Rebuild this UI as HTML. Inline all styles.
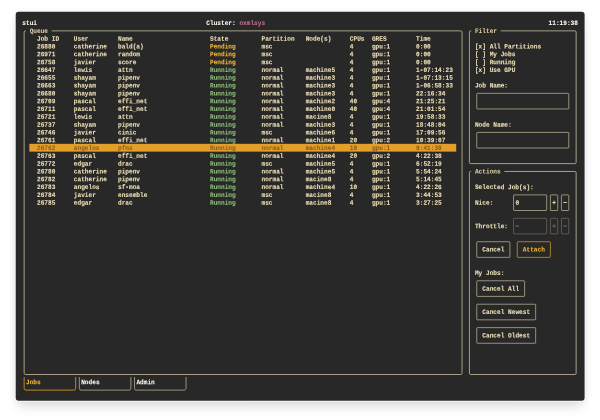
<!DOCTYPE html>
<html><head><meta charset="utf-8"><title>stui</title>
<style>
html,body{margin:0;padding:0;background:#fff;}
body{width:600px;height:420px;position:relative;overflow:hidden;}
#win{position:absolute;left:16px;top:12px;width:568px;height:388px;background:#282828;border-radius:3.5px;box-shadow:0 8px 12px -2px rgba(0,0,0,.15),0 0 7px rgba(0,0,0,.07);}
svg{position:absolute;left:0;top:0;}
#tx{position:absolute;left:0;top:0;width:600px;height:420px;will-change:transform;}
.t{position:absolute;left:0;top:0;transform-origin:0 0;font-family:"Liberation Mono",monospace;font-size:6.133px;line-height:7.81px;height:7.81px;white-space:pre;font-weight:bold;letter-spacing:0;text-rendering:geometricPrecision;-webkit-text-stroke:0.05px currentColor;}
</style></head><body>
<div id="win"></div>
<svg width="600" height="420" viewBox="0 0 600 420" fill="none" stroke-width="0.8" stroke-linecap="butt">
<rect x="14.80" y="11.35" width="570.70" height="390.40" rx="3.4" fill="#fafafa" stroke="none"/>
<rect x="15.7" y="11.85" width="568.90" height="388.80" rx="3" fill="#282828" stroke="none"/>
<rect x="29.36" y="143.81" width="426.88" height="7.81" fill="#e3a028" stroke="none"/>
<path d="M51.74,30.86H460.81Q462.06,30.86 462.06,32.11V373.25Q462.06,374.50 460.81,374.50H25.39Q24.14,374.50 24.14,373.25V32.11Q24.14,30.86 25.39,30.86H25.98" stroke="#c9bc9b" stroke-width="0.8"/>
<path d="M500.70,30.86H574.89Q576.14,30.86 576.14,32.11V162.38Q576.14,163.63 574.89,163.63H470.67Q469.42,163.63 469.42,162.38V32.11Q469.42,30.86 470.67,30.86H471.26" stroke="#c9bc9b" stroke-width="0.8"/>
<path d="M504.38,171.44H574.89Q576.14,171.44 576.14,172.69V373.25Q576.14,374.50 574.89,374.50H470.67Q469.42,374.50 469.42,373.25V172.69Q469.42,171.44 470.67,171.44H471.26" stroke="#c9bc9b" stroke-width="0.8"/>
<path d="M477.38,93.34H568.18Q568.78,93.34 568.78,93.94V108.37Q568.78,108.97 568.18,108.97H477.38Q476.78,108.97 476.78,108.37V93.94Q476.78,93.34 477.38,93.34Z" stroke="#c9bc9b" stroke-width="0.7"/>
<path d="M477.38,132.39H568.18Q568.78,132.39 568.78,132.99V147.41Q568.78,148.01 568.18,148.01H477.38Q476.78,148.01 476.78,147.41V132.99Q476.78,132.39 477.38,132.39Z" stroke="#c9bc9b" stroke-width="0.7"/>
<path d="M514.18,194.88H546.10Q546.70,194.88 546.70,195.47V209.90Q546.70,210.50 546.10,210.50H514.18Q513.58,210.50 513.58,209.90V195.47Q513.58,194.88 514.18,194.88Z" stroke="#c9bc9b" stroke-width="0.7"/>
<path d="M550.98,194.88H557.14Q557.74,194.88 557.74,195.47V209.90Q557.74,210.50 557.14,210.50H550.98Q550.38,210.50 550.38,209.90V195.47Q550.38,194.88 550.98,194.88Z" stroke="#c9bc9b" stroke-width="0.7"/>
<path d="M562.02,194.88H568.18Q568.78,194.88 568.78,195.47V209.90Q568.78,210.50 568.18,210.50H562.02Q561.42,210.50 561.42,209.90V195.47Q561.42,194.88 562.02,194.88Z" stroke="#c9bc9b" stroke-width="0.7"/>
<path d="M514.18,218.31H546.10Q546.70,218.31 546.70,218.91V233.32Q546.70,233.92 546.10,233.92H514.18Q513.58,233.92 513.58,233.32V218.91Q513.58,218.31 514.18,218.31Z" stroke="#786e62" stroke-width="0.7"/>
<path d="M550.98,218.31H557.14Q557.74,218.31 557.74,218.91V233.32Q557.74,233.92 557.14,233.92H550.98Q550.38,233.92 550.38,233.32V218.91Q550.38,218.31 550.98,218.31Z" stroke="#786e62" stroke-width="0.7"/>
<path d="M562.02,218.31H568.18Q568.78,218.31 568.78,218.91V233.32Q568.78,233.92 568.18,233.92H562.02Q561.42,233.92 561.42,233.32V218.91Q561.42,218.31 562.02,218.31Z" stroke="#786e62" stroke-width="0.7"/>
<path d="M477.38,241.73H509.30Q509.90,241.73 509.90,242.33V256.75Q509.90,257.35 509.30,257.35H477.38Q476.78,257.35 476.78,256.75V242.33Q476.78,241.73 477.38,241.73Z" stroke="#c9bc9b" stroke-width="0.7"/>
<path d="M517.86,241.73H549.78Q550.38,241.73 550.38,242.33V256.75Q550.38,257.35 549.78,257.35H517.86Q517.26,257.35 517.26,256.75V242.33Q517.26,241.73 517.86,241.73Z" stroke="#e3a028" stroke-width="0.7"/>
<path d="M477.38,280.78H524.02Q524.62,280.78 524.62,281.38V295.80Q524.62,296.40 524.02,296.40H477.38Q476.78,296.40 476.78,295.80V281.38Q476.78,280.78 477.38,280.78Z" stroke="#c9bc9b" stroke-width="0.7"/>
<path d="M477.38,304.21H535.06Q535.66,304.21 535.66,304.81V319.23Q535.66,319.83 535.06,319.83H477.38Q476.78,319.83 476.78,319.23V304.81Q476.78,304.21 477.38,304.21Z" stroke="#c9bc9b" stroke-width="0.7"/>
<path d="M477.38,327.64H535.06Q535.66,327.64 535.66,328.24V342.66Q535.66,343.26 535.06,343.26H477.38Q476.78,343.26 476.78,342.66V328.24Q476.78,327.64 477.38,327.64Z" stroke="#c9bc9b" stroke-width="0.7"/>
<path d="M24.14,377.01V388.32Q24.14,390.12 25.94,390.12H73.86Q75.66,390.12 75.66,388.32V377.01" stroke="#e3a028" stroke-width="0.8"/>
<path d="M79.34,377.01V388.32Q79.34,390.12 81.14,390.12H129.06Q130.86,390.12 130.86,388.32V377.01" stroke="#b8ad90" stroke-width="0.8"/>
<path d="M134.54,377.01V388.32Q134.54,390.12 136.34,390.12H184.26Q186.06,390.12 186.06,388.32V377.01" stroke="#b8ad90" stroke-width="0.8"/>
</svg>
<div id="tx">
<span class="t" style="transform:translate(22.30px,19.60px) rotate(.04deg) scale(1,1.1);color:#fffdf4">stui</span>
<span class="t" style="transform:translate(206.30px,19.60px) rotate(.04deg) scale(1,1.1);color:#fffdf4">Cluster:</span>
<span class="t" style="transform:translate(239.42px,19.60px) rotate(.04deg) scale(1,1.1);color:#c5708f">oxmlsys</span>
<span class="t" style="transform:translate(548.54px,19.60px) rotate(.04deg) scale(1,1.1);color:#fffdf4">11:19:38</span>
<span class="t" style="transform:translate(29.66px,27.41px) rotate(.04deg) scale(1,1.1);color:#dccda2">Queue</span>
<span class="t" style="transform:translate(474.94px,27.41px) rotate(.04deg) scale(1,1.1);color:#dccda2">Filter</span>
<span class="t" style="transform:translate(474.94px,167.99px) rotate(.04deg) scale(1,1.1);color:#dccda2">Actions</span>
<span class="t" style="transform:translate(37.02px,35.22px) rotate(.04deg) scale(1,1.1);color:#f0e2b8">Job ID</span>
<span class="t" style="transform:translate(73.82px,35.22px) rotate(.04deg) scale(1,1.1);color:#f0e2b8">User</span>
<span class="t" style="transform:translate(117.98px,35.22px) rotate(.04deg) scale(1,1.1);color:#f0e2b8">Name</span>
<span class="t" style="transform:translate(209.98px,35.22px) rotate(.04deg) scale(1,1.1);color:#f0e2b8">State</span>
<span class="t" style="transform:translate(261.50px,35.22px) rotate(.04deg) scale(1,1.1);color:#f0e2b8">Partition</span>
<span class="t" style="transform:translate(305.66px,35.22px) rotate(.04deg) scale(1,1.1);color:#f0e2b8">Node(s)</span>
<span class="t" style="transform:translate(349.82px,35.22px) rotate(.04deg) scale(1,1.1);color:#f0e2b8">CPUs</span>
<span class="t" style="transform:translate(371.90px,35.22px) rotate(.04deg) scale(1,1.1);color:#f0e2b8">GRES</span>
<span class="t" style="transform:translate(416.06px,35.22px) rotate(.04deg) scale(1,1.1);color:#f0e2b8">Time</span>
<span class="t" style="transform:translate(37.02px,43.03px) rotate(.04deg) scale(1,1.1);color:#f0e2b8">26880</span>
<span class="t" style="transform:translate(73.82px,43.03px) rotate(.04deg) scale(1,1.1);color:#f0e2b8">catherine</span>
<span class="t" style="transform:translate(117.98px,43.03px) rotate(.04deg) scale(1,1.1);color:#f0e2b8">bald(a)</span>
<span class="t" style="transform:translate(209.98px,43.03px) rotate(.04deg) scale(1,1.1);color:#fabd2f">Pending</span>
<span class="t" style="transform:translate(261.50px,43.03px) rotate(.04deg) scale(1,1.1);color:#f0e2b8">msc</span>
<span class="t" style="transform:translate(349.82px,43.03px) rotate(.04deg) scale(1,1.1);color:#f0e2b8">4</span>
<span class="t" style="transform:translate(371.90px,43.03px) rotate(.04deg) scale(1,1.1);color:#f0e2b8">gpu:1</span>
<span class="t" style="transform:translate(416.06px,43.03px) rotate(.04deg) scale(1,1.1);color:#f0e2b8">0:00</span>
<span class="t" style="transform:translate(37.02px,50.84px) rotate(.04deg) scale(1,1.1);color:#f0e2b8">26971</span>
<span class="t" style="transform:translate(73.82px,50.84px) rotate(.04deg) scale(1,1.1);color:#f0e2b8">catherine</span>
<span class="t" style="transform:translate(117.98px,50.84px) rotate(.04deg) scale(1,1.1);color:#f0e2b8">random</span>
<span class="t" style="transform:translate(209.98px,50.84px) rotate(.04deg) scale(1,1.1);color:#fabd2f">Pending</span>
<span class="t" style="transform:translate(261.50px,50.84px) rotate(.04deg) scale(1,1.1);color:#f0e2b8">msc</span>
<span class="t" style="transform:translate(349.82px,50.84px) rotate(.04deg) scale(1,1.1);color:#f0e2b8">4</span>
<span class="t" style="transform:translate(371.90px,50.84px) rotate(.04deg) scale(1,1.1);color:#f0e2b8">gpu:1</span>
<span class="t" style="transform:translate(416.06px,50.84px) rotate(.04deg) scale(1,1.1);color:#f0e2b8">0:00</span>
<span class="t" style="transform:translate(37.02px,58.65px) rotate(.04deg) scale(1,1.1);color:#f0e2b8">26758</span>
<span class="t" style="transform:translate(73.82px,58.65px) rotate(.04deg) scale(1,1.1);color:#f0e2b8">javier</span>
<span class="t" style="transform:translate(117.98px,58.65px) rotate(.04deg) scale(1,1.1);color:#f0e2b8">score</span>
<span class="t" style="transform:translate(209.98px,58.65px) rotate(.04deg) scale(1,1.1);color:#fabd2f">Pending</span>
<span class="t" style="transform:translate(261.50px,58.65px) rotate(.04deg) scale(1,1.1);color:#f0e2b8">msc</span>
<span class="t" style="transform:translate(349.82px,58.65px) rotate(.04deg) scale(1,1.1);color:#f0e2b8">4</span>
<span class="t" style="transform:translate(371.90px,58.65px) rotate(.04deg) scale(1,1.1);color:#f0e2b8">gpu:1</span>
<span class="t" style="transform:translate(416.06px,58.65px) rotate(.04deg) scale(1,1.1);color:#f0e2b8">0:00</span>
<span class="t" style="transform:translate(37.02px,66.46px) rotate(.04deg) scale(1,1.1);color:#f0e2b8">26647</span>
<span class="t" style="transform:translate(73.82px,66.46px) rotate(.04deg) scale(1,1.1);color:#f0e2b8">lewis</span>
<span class="t" style="transform:translate(117.98px,66.46px) rotate(.04deg) scale(1,1.1);color:#f0e2b8">attn</span>
<span class="t" style="transform:translate(209.98px,66.46px) rotate(.04deg) scale(1,1.1);color:#8ec07c">Running</span>
<span class="t" style="transform:translate(261.50px,66.46px) rotate(.04deg) scale(1,1.1);color:#f0e2b8">normal</span>
<span class="t" style="transform:translate(305.66px,66.46px) rotate(.04deg) scale(1,1.1);color:#f0e2b8">machine5</span>
<span class="t" style="transform:translate(349.82px,66.46px) rotate(.04deg) scale(1,1.1);color:#f0e2b8">4</span>
<span class="t" style="transform:translate(371.90px,66.46px) rotate(.04deg) scale(1,1.1);color:#f0e2b8">gpu:1</span>
<span class="t" style="transform:translate(416.06px,66.46px) rotate(.04deg) scale(1,1.1);color:#f0e2b8">1-07:14:23</span>
<span class="t" style="transform:translate(37.02px,74.27px) rotate(.04deg) scale(1,1.1);color:#f0e2b8">26655</span>
<span class="t" style="transform:translate(73.82px,74.27px) rotate(.04deg) scale(1,1.1);color:#f0e2b8">shayam</span>
<span class="t" style="transform:translate(117.98px,74.27px) rotate(.04deg) scale(1,1.1);color:#f0e2b8">pipenv</span>
<span class="t" style="transform:translate(209.98px,74.27px) rotate(.04deg) scale(1,1.1);color:#8ec07c">Running</span>
<span class="t" style="transform:translate(261.50px,74.27px) rotate(.04deg) scale(1,1.1);color:#f0e2b8">normal</span>
<span class="t" style="transform:translate(305.66px,74.27px) rotate(.04deg) scale(1,1.1);color:#f0e2b8">machine3</span>
<span class="t" style="transform:translate(349.82px,74.27px) rotate(.04deg) scale(1,1.1);color:#f0e2b8">4</span>
<span class="t" style="transform:translate(371.90px,74.27px) rotate(.04deg) scale(1,1.1);color:#f0e2b8">gpu:1</span>
<span class="t" style="transform:translate(416.06px,74.27px) rotate(.04deg) scale(1,1.1);color:#f0e2b8">1-07:13:15</span>
<span class="t" style="transform:translate(37.02px,82.08px) rotate(.04deg) scale(1,1.1);color:#f0e2b8">26663</span>
<span class="t" style="transform:translate(73.82px,82.08px) rotate(.04deg) scale(1,1.1);color:#f0e2b8">shayam</span>
<span class="t" style="transform:translate(117.98px,82.08px) rotate(.04deg) scale(1,1.1);color:#f0e2b8">pipenv</span>
<span class="t" style="transform:translate(209.98px,82.08px) rotate(.04deg) scale(1,1.1);color:#8ec07c">Running</span>
<span class="t" style="transform:translate(261.50px,82.08px) rotate(.04deg) scale(1,1.1);color:#f0e2b8">normal</span>
<span class="t" style="transform:translate(305.66px,82.08px) rotate(.04deg) scale(1,1.1);color:#f0e2b8">machine3</span>
<span class="t" style="transform:translate(349.82px,82.08px) rotate(.04deg) scale(1,1.1);color:#f0e2b8">4</span>
<span class="t" style="transform:translate(371.90px,82.08px) rotate(.04deg) scale(1,1.1);color:#f0e2b8">gpu:1</span>
<span class="t" style="transform:translate(416.06px,82.08px) rotate(.04deg) scale(1,1.1);color:#f0e2b8">1-06:58:33</span>
<span class="t" style="transform:translate(37.02px,89.89px) rotate(.04deg) scale(1,1.1);color:#f0e2b8">26680</span>
<span class="t" style="transform:translate(73.82px,89.89px) rotate(.04deg) scale(1,1.1);color:#f0e2b8">shayam</span>
<span class="t" style="transform:translate(117.98px,89.89px) rotate(.04deg) scale(1,1.1);color:#f0e2b8">pipenv</span>
<span class="t" style="transform:translate(209.98px,89.89px) rotate(.04deg) scale(1,1.1);color:#8ec07c">Running</span>
<span class="t" style="transform:translate(261.50px,89.89px) rotate(.04deg) scale(1,1.1);color:#f0e2b8">normal</span>
<span class="t" style="transform:translate(305.66px,89.89px) rotate(.04deg) scale(1,1.1);color:#f0e2b8">machine3</span>
<span class="t" style="transform:translate(349.82px,89.89px) rotate(.04deg) scale(1,1.1);color:#f0e2b8">4</span>
<span class="t" style="transform:translate(371.90px,89.89px) rotate(.04deg) scale(1,1.1);color:#f0e2b8">gpu:1</span>
<span class="t" style="transform:translate(416.06px,89.89px) rotate(.04deg) scale(1,1.1);color:#f0e2b8">22:16:34</span>
<span class="t" style="transform:translate(37.02px,97.70px) rotate(.04deg) scale(1,1.1);color:#f0e2b8">26709</span>
<span class="t" style="transform:translate(73.82px,97.70px) rotate(.04deg) scale(1,1.1);color:#f0e2b8">pascal</span>
<span class="t" style="transform:translate(117.98px,97.70px) rotate(.04deg) scale(1,1.1);color:#f0e2b8">effi_net</span>
<span class="t" style="transform:translate(209.98px,97.70px) rotate(.04deg) scale(1,1.1);color:#8ec07c">Running</span>
<span class="t" style="transform:translate(261.50px,97.70px) rotate(.04deg) scale(1,1.1);color:#f0e2b8">normal</span>
<span class="t" style="transform:translate(305.66px,97.70px) rotate(.04deg) scale(1,1.1);color:#f0e2b8">machine2</span>
<span class="t" style="transform:translate(349.82px,97.70px) rotate(.04deg) scale(1,1.1);color:#f0e2b8">40</span>
<span class="t" style="transform:translate(371.90px,97.70px) rotate(.04deg) scale(1,1.1);color:#f0e2b8">gpu:4</span>
<span class="t" style="transform:translate(416.06px,97.70px) rotate(.04deg) scale(1,1.1);color:#f0e2b8">21:25:21</span>
<span class="t" style="transform:translate(37.02px,105.51px) rotate(.04deg) scale(1,1.1);color:#f0e2b8">26711</span>
<span class="t" style="transform:translate(73.82px,105.51px) rotate(.04deg) scale(1,1.1);color:#f0e2b8">pascal</span>
<span class="t" style="transform:translate(117.98px,105.51px) rotate(.04deg) scale(1,1.1);color:#f0e2b8">effi_net</span>
<span class="t" style="transform:translate(209.98px,105.51px) rotate(.04deg) scale(1,1.1);color:#8ec07c">Running</span>
<span class="t" style="transform:translate(261.50px,105.51px) rotate(.04deg) scale(1,1.1);color:#f0e2b8">normal</span>
<span class="t" style="transform:translate(305.66px,105.51px) rotate(.04deg) scale(1,1.1);color:#f0e2b8">machine0</span>
<span class="t" style="transform:translate(349.82px,105.51px) rotate(.04deg) scale(1,1.1);color:#f0e2b8">40</span>
<span class="t" style="transform:translate(371.90px,105.51px) rotate(.04deg) scale(1,1.1);color:#f0e2b8">gpu:4</span>
<span class="t" style="transform:translate(416.06px,105.51px) rotate(.04deg) scale(1,1.1);color:#f0e2b8">21:01:54</span>
<span class="t" style="transform:translate(37.02px,113.32px) rotate(.04deg) scale(1,1.1);color:#f0e2b8">26721</span>
<span class="t" style="transform:translate(73.82px,113.32px) rotate(.04deg) scale(1,1.1);color:#f0e2b8">lewis</span>
<span class="t" style="transform:translate(117.98px,113.32px) rotate(.04deg) scale(1,1.1);color:#f0e2b8">attn</span>
<span class="t" style="transform:translate(209.98px,113.32px) rotate(.04deg) scale(1,1.1);color:#8ec07c">Running</span>
<span class="t" style="transform:translate(261.50px,113.32px) rotate(.04deg) scale(1,1.1);color:#f0e2b8">normal</span>
<span class="t" style="transform:translate(305.66px,113.32px) rotate(.04deg) scale(1,1.1);color:#f0e2b8">macine8</span>
<span class="t" style="transform:translate(349.82px,113.32px) rotate(.04deg) scale(1,1.1);color:#f0e2b8">4</span>
<span class="t" style="transform:translate(371.90px,113.32px) rotate(.04deg) scale(1,1.1);color:#f0e2b8">gpu:1</span>
<span class="t" style="transform:translate(416.06px,113.32px) rotate(.04deg) scale(1,1.1);color:#f0e2b8">19:58:33</span>
<span class="t" style="transform:translate(37.02px,121.13px) rotate(.04deg) scale(1,1.1);color:#f0e2b8">26737</span>
<span class="t" style="transform:translate(73.82px,121.13px) rotate(.04deg) scale(1,1.1);color:#f0e2b8">shayam</span>
<span class="t" style="transform:translate(117.98px,121.13px) rotate(.04deg) scale(1,1.1);color:#f0e2b8">pipenv</span>
<span class="t" style="transform:translate(209.98px,121.13px) rotate(.04deg) scale(1,1.1);color:#8ec07c">Running</span>
<span class="t" style="transform:translate(261.50px,121.13px) rotate(.04deg) scale(1,1.1);color:#f0e2b8">normal</span>
<span class="t" style="transform:translate(305.66px,121.13px) rotate(.04deg) scale(1,1.1);color:#f0e2b8">machine3</span>
<span class="t" style="transform:translate(349.82px,121.13px) rotate(.04deg) scale(1,1.1);color:#f0e2b8">4</span>
<span class="t" style="transform:translate(371.90px,121.13px) rotate(.04deg) scale(1,1.1);color:#f0e2b8">gpu:1</span>
<span class="t" style="transform:translate(416.06px,121.13px) rotate(.04deg) scale(1,1.1);color:#f0e2b8">18:48:04</span>
<span class="t" style="transform:translate(37.02px,128.94px) rotate(.04deg) scale(1,1.1);color:#f0e2b8">26746</span>
<span class="t" style="transform:translate(73.82px,128.94px) rotate(.04deg) scale(1,1.1);color:#f0e2b8">javier</span>
<span class="t" style="transform:translate(117.98px,128.94px) rotate(.04deg) scale(1,1.1);color:#f0e2b8">cinic</span>
<span class="t" style="transform:translate(209.98px,128.94px) rotate(.04deg) scale(1,1.1);color:#8ec07c">Running</span>
<span class="t" style="transform:translate(261.50px,128.94px) rotate(.04deg) scale(1,1.1);color:#f0e2b8">msc</span>
<span class="t" style="transform:translate(305.66px,128.94px) rotate(.04deg) scale(1,1.1);color:#f0e2b8">machine6</span>
<span class="t" style="transform:translate(349.82px,128.94px) rotate(.04deg) scale(1,1.1);color:#f0e2b8">4</span>
<span class="t" style="transform:translate(371.90px,128.94px) rotate(.04deg) scale(1,1.1);color:#f0e2b8">gpu:1</span>
<span class="t" style="transform:translate(416.06px,128.94px) rotate(.04deg) scale(1,1.1);color:#f0e2b8">17:09:56</span>
<span class="t" style="transform:translate(37.02px,136.75px) rotate(.04deg) scale(1,1.1);color:#f0e2b8">26761</span>
<span class="t" style="transform:translate(73.82px,136.75px) rotate(.04deg) scale(1,1.1);color:#f0e2b8">pascal</span>
<span class="t" style="transform:translate(117.98px,136.75px) rotate(.04deg) scale(1,1.1);color:#f0e2b8">effi_net</span>
<span class="t" style="transform:translate(209.98px,136.75px) rotate(.04deg) scale(1,1.1);color:#8ec07c">Running</span>
<span class="t" style="transform:translate(261.50px,136.75px) rotate(.04deg) scale(1,1.1);color:#f0e2b8">normal</span>
<span class="t" style="transform:translate(305.66px,136.75px) rotate(.04deg) scale(1,1.1);color:#f0e2b8">machine1</span>
<span class="t" style="transform:translate(349.82px,136.75px) rotate(.04deg) scale(1,1.1);color:#f0e2b8">20</span>
<span class="t" style="transform:translate(371.90px,136.75px) rotate(.04deg) scale(1,1.1);color:#f0e2b8">gpu:2</span>
<span class="t" style="transform:translate(416.06px,136.75px) rotate(.04deg) scale(1,1.1);color:#f0e2b8">10:39:07</span>
<span class="t" style="transform:translate(37.02px,144.56px) rotate(.04deg) scale(1,1.1);color:#8e5a24">26762</span>
<span class="t" style="transform:translate(73.82px,144.56px) rotate(.04deg) scale(1,1.1);color:#8e5a24">angelos</span>
<span class="t" style="transform:translate(117.98px,144.56px) rotate(.04deg) scale(1,1.1);color:#8e5a24">pfns</span>
<span class="t" style="transform:translate(209.98px,144.56px) rotate(.04deg) scale(1,1.1);color:#8e5a24">Running</span>
<span class="t" style="transform:translate(261.50px,144.56px) rotate(.04deg) scale(1,1.1);color:#8e5a24">normal</span>
<span class="t" style="transform:translate(305.66px,144.56px) rotate(.04deg) scale(1,1.1);color:#8e5a24">machine4</span>
<span class="t" style="transform:translate(349.82px,144.56px) rotate(.04deg) scale(1,1.1);color:#8e5a24">10</span>
<span class="t" style="transform:translate(371.90px,144.56px) rotate(.04deg) scale(1,1.1);color:#8e5a24">gpu:1</span>
<span class="t" style="transform:translate(416.06px,144.56px) rotate(.04deg) scale(1,1.1);color:#8e5a24">9:41:38</span>
<span class="t" style="transform:translate(37.02px,152.37px) rotate(.04deg) scale(1,1.1);color:#f0e2b8">26763</span>
<span class="t" style="transform:translate(73.82px,152.37px) rotate(.04deg) scale(1,1.1);color:#f0e2b8">pascal</span>
<span class="t" style="transform:translate(117.98px,152.37px) rotate(.04deg) scale(1,1.1);color:#f0e2b8">effi_net</span>
<span class="t" style="transform:translate(209.98px,152.37px) rotate(.04deg) scale(1,1.1);color:#8ec07c">Running</span>
<span class="t" style="transform:translate(261.50px,152.37px) rotate(.04deg) scale(1,1.1);color:#f0e2b8">normal</span>
<span class="t" style="transform:translate(305.66px,152.37px) rotate(.04deg) scale(1,1.1);color:#f0e2b8">machine4</span>
<span class="t" style="transform:translate(349.82px,152.37px) rotate(.04deg) scale(1,1.1);color:#f0e2b8">20</span>
<span class="t" style="transform:translate(371.90px,152.37px) rotate(.04deg) scale(1,1.1);color:#f0e2b8">gpu:2</span>
<span class="t" style="transform:translate(416.06px,152.37px) rotate(.04deg) scale(1,1.1);color:#f0e2b8">4:22:38</span>
<span class="t" style="transform:translate(37.02px,160.18px) rotate(.04deg) scale(1,1.1);color:#f0e2b8">26772</span>
<span class="t" style="transform:translate(73.82px,160.18px) rotate(.04deg) scale(1,1.1);color:#f0e2b8">edgar</span>
<span class="t" style="transform:translate(117.98px,160.18px) rotate(.04deg) scale(1,1.1);color:#f0e2b8">drac</span>
<span class="t" style="transform:translate(209.98px,160.18px) rotate(.04deg) scale(1,1.1);color:#8ec07c">Running</span>
<span class="t" style="transform:translate(261.50px,160.18px) rotate(.04deg) scale(1,1.1);color:#f0e2b8">msc</span>
<span class="t" style="transform:translate(305.66px,160.18px) rotate(.04deg) scale(1,1.1);color:#f0e2b8">machine5</span>
<span class="t" style="transform:translate(349.82px,160.18px) rotate(.04deg) scale(1,1.1);color:#f0e2b8">4</span>
<span class="t" style="transform:translate(371.90px,160.18px) rotate(.04deg) scale(1,1.1);color:#f0e2b8">gpu:1</span>
<span class="t" style="transform:translate(416.06px,160.18px) rotate(.04deg) scale(1,1.1);color:#f0e2b8">6:52:19</span>
<span class="t" style="transform:translate(37.02px,167.99px) rotate(.04deg) scale(1,1.1);color:#f0e2b8">26780</span>
<span class="t" style="transform:translate(73.82px,167.99px) rotate(.04deg) scale(1,1.1);color:#f0e2b8">catherine</span>
<span class="t" style="transform:translate(117.98px,167.99px) rotate(.04deg) scale(1,1.1);color:#f0e2b8">pipenv</span>
<span class="t" style="transform:translate(209.98px,167.99px) rotate(.04deg) scale(1,1.1);color:#8ec07c">Running</span>
<span class="t" style="transform:translate(261.50px,167.99px) rotate(.04deg) scale(1,1.1);color:#f0e2b8">normal</span>
<span class="t" style="transform:translate(305.66px,167.99px) rotate(.04deg) scale(1,1.1);color:#f0e2b8">machine5</span>
<span class="t" style="transform:translate(349.82px,167.99px) rotate(.04deg) scale(1,1.1);color:#f0e2b8">4</span>
<span class="t" style="transform:translate(371.90px,167.99px) rotate(.04deg) scale(1,1.1);color:#f0e2b8">gpu:1</span>
<span class="t" style="transform:translate(416.06px,167.99px) rotate(.04deg) scale(1,1.1);color:#f0e2b8">5:54:24</span>
<span class="t" style="transform:translate(37.02px,175.80px) rotate(.04deg) scale(1,1.1);color:#f0e2b8">26782</span>
<span class="t" style="transform:translate(73.82px,175.80px) rotate(.04deg) scale(1,1.1);color:#f0e2b8">catherine</span>
<span class="t" style="transform:translate(117.98px,175.80px) rotate(.04deg) scale(1,1.1);color:#f0e2b8">pipenv</span>
<span class="t" style="transform:translate(209.98px,175.80px) rotate(.04deg) scale(1,1.1);color:#8ec07c">Running</span>
<span class="t" style="transform:translate(261.50px,175.80px) rotate(.04deg) scale(1,1.1);color:#f0e2b8">normal</span>
<span class="t" style="transform:translate(305.66px,175.80px) rotate(.04deg) scale(1,1.1);color:#f0e2b8">macine8</span>
<span class="t" style="transform:translate(349.82px,175.80px) rotate(.04deg) scale(1,1.1);color:#f0e2b8">4</span>
<span class="t" style="transform:translate(371.90px,175.80px) rotate(.04deg) scale(1,1.1);color:#f0e2b8">gpu:1</span>
<span class="t" style="transform:translate(416.06px,175.80px) rotate(.04deg) scale(1,1.1);color:#f0e2b8">5:14:45</span>
<span class="t" style="transform:translate(37.02px,183.61px) rotate(.04deg) scale(1,1.1);color:#f0e2b8">26783</span>
<span class="t" style="transform:translate(73.82px,183.61px) rotate(.04deg) scale(1,1.1);color:#f0e2b8">angelos</span>
<span class="t" style="transform:translate(117.98px,183.61px) rotate(.04deg) scale(1,1.1);color:#f0e2b8">sf-moa</span>
<span class="t" style="transform:translate(209.98px,183.61px) rotate(.04deg) scale(1,1.1);color:#8ec07c">Running</span>
<span class="t" style="transform:translate(261.50px,183.61px) rotate(.04deg) scale(1,1.1);color:#f0e2b8">normal</span>
<span class="t" style="transform:translate(305.66px,183.61px) rotate(.04deg) scale(1,1.1);color:#f0e2b8">machine4</span>
<span class="t" style="transform:translate(349.82px,183.61px) rotate(.04deg) scale(1,1.1);color:#f0e2b8">10</span>
<span class="t" style="transform:translate(371.90px,183.61px) rotate(.04deg) scale(1,1.1);color:#f0e2b8">gpu:1</span>
<span class="t" style="transform:translate(416.06px,183.61px) rotate(.04deg) scale(1,1.1);color:#f0e2b8">4:22:26</span>
<span class="t" style="transform:translate(37.02px,191.42px) rotate(.04deg) scale(1,1.1);color:#f0e2b8">26784</span>
<span class="t" style="transform:translate(73.82px,191.42px) rotate(.04deg) scale(1,1.1);color:#f0e2b8">javier</span>
<span class="t" style="transform:translate(117.98px,191.42px) rotate(.04deg) scale(1,1.1);color:#f0e2b8">ensemble</span>
<span class="t" style="transform:translate(209.98px,191.42px) rotate(.04deg) scale(1,1.1);color:#8ec07c">Running</span>
<span class="t" style="transform:translate(261.50px,191.42px) rotate(.04deg) scale(1,1.1);color:#f0e2b8">msc</span>
<span class="t" style="transform:translate(305.66px,191.42px) rotate(.04deg) scale(1,1.1);color:#f0e2b8">macine8</span>
<span class="t" style="transform:translate(349.82px,191.42px) rotate(.04deg) scale(1,1.1);color:#f0e2b8">4</span>
<span class="t" style="transform:translate(371.90px,191.42px) rotate(.04deg) scale(1,1.1);color:#f0e2b8">gpu:1</span>
<span class="t" style="transform:translate(416.06px,191.42px) rotate(.04deg) scale(1,1.1);color:#f0e2b8">3:44:53</span>
<span class="t" style="transform:translate(37.02px,199.23px) rotate(.04deg) scale(1,1.1);color:#f0e2b8">26785</span>
<span class="t" style="transform:translate(73.82px,199.23px) rotate(.04deg) scale(1,1.1);color:#f0e2b8">edgar</span>
<span class="t" style="transform:translate(117.98px,199.23px) rotate(.04deg) scale(1,1.1);color:#f0e2b8">drac</span>
<span class="t" style="transform:translate(209.98px,199.23px) rotate(.04deg) scale(1,1.1);color:#8ec07c">Running</span>
<span class="t" style="transform:translate(261.50px,199.23px) rotate(.04deg) scale(1,1.1);color:#f0e2b8">msc</span>
<span class="t" style="transform:translate(305.66px,199.23px) rotate(.04deg) scale(1,1.1);color:#f0e2b8">macine8</span>
<span class="t" style="transform:translate(349.82px,199.23px) rotate(.04deg) scale(1,1.1);color:#f0e2b8">4</span>
<span class="t" style="transform:translate(371.90px,199.23px) rotate(.04deg) scale(1,1.1);color:#f0e2b8">gpu:1</span>
<span class="t" style="transform:translate(416.06px,199.23px) rotate(.04deg) scale(1,1.1);color:#f0e2b8">3:27:25</span>
<span class="t" style="transform:translate(474.94px,43.03px) rotate(.04deg) scale(1,1.1);color:#f0e2b8">[x] All Partitions</span>
<span class="t" style="transform:translate(474.94px,50.84px) rotate(.04deg) scale(1,1.1);color:#f0e2b8">[ ] My Jobs</span>
<span class="t" style="transform:translate(474.94px,58.65px) rotate(.04deg) scale(1,1.1);color:#f0e2b8">[ ] Running</span>
<span class="t" style="transform:translate(474.94px,66.46px) rotate(.04deg) scale(1,1.1);color:#f0e2b8">[x] Use GPU</span>
<span class="t" style="transform:translate(474.94px,82.08px) rotate(.04deg) scale(1,1.1);color:#f0e2b8">Job Name:</span>
<span class="t" style="transform:translate(474.94px,121.13px) rotate(.04deg) scale(1,1.1);color:#f0e2b8">Node Name:</span>
<span class="t" style="transform:translate(474.94px,183.61px) rotate(.04deg) scale(1,1.1);color:#f0e2b8">Selected Job(s):</span>
<span class="t" style="transform:translate(474.94px,199.23px) rotate(.04deg) scale(1,1.1);color:#f0e2b8">Nice:</span>
<span class="t" style="transform:translate(515.42px,199.23px) rotate(.04deg) scale(1,1.1);color:#f0e2b8">0</span>
<span class="t" style="transform:translate(552.22px,199.23px) rotate(.04deg) scale(1,1.1);color:#f0e2b8">+</span>
<span class="t" style="transform:translate(563.26px,199.23px) rotate(.04deg) scale(1,1.1);color:#f0e2b8">−</span>
<span class="t" style="transform:translate(474.94px,222.66px) rotate(.04deg) scale(1,1.1);color:#f0e2b8">Throttle:</span>
<span class="t" style="transform:translate(515.42px,222.66px) rotate(.04deg) scale(1,1.1);color:#786e62">−</span>
<span class="t" style="transform:translate(552.22px,222.66px) rotate(.04deg) scale(1,1.1);color:#786e62">+</span>
<span class="t" style="transform:translate(563.26px,222.66px) rotate(.04deg) scale(1,1.1);color:#786e62">−</span>
<span class="t" style="transform:translate(482.30px,246.09px) rotate(.04deg) scale(1,1.1);color:#f0e2b8">Cancel</span>
<span class="t" style="transform:translate(522.78px,246.09px) rotate(.04deg) scale(1,1.1);color:#fabd2f">Attach</span>
<span class="t" style="transform:translate(474.94px,269.52px) rotate(.04deg) scale(1,1.1);color:#f0e2b8">My Jobs:</span>
<span class="t" style="transform:translate(482.30px,285.14px) rotate(.04deg) scale(1,1.1);color:#f0e2b8">Cancel All</span>
<span class="t" style="transform:translate(482.30px,308.57px) rotate(.04deg) scale(1,1.1);color:#f0e2b8">Cancel Newest</span>
<span class="t" style="transform:translate(482.30px,332.00px) rotate(.04deg) scale(1,1.1);color:#f0e2b8">Cancel Oldest</span>
<span class="t" style="transform:translate(25.98px,378.86px) rotate(.04deg) scale(1,1.1);color:#fabd2f">Jobs</span>
<span class="t" style="transform:translate(81.18px,378.86px) rotate(.04deg) scale(1,1.1);color:#fffdf4">Nodes</span>
<span class="t" style="transform:translate(136.38px,378.86px) rotate(.04deg) scale(1,1.1);color:#fffdf4">Admin</span>
</div></body></html>
